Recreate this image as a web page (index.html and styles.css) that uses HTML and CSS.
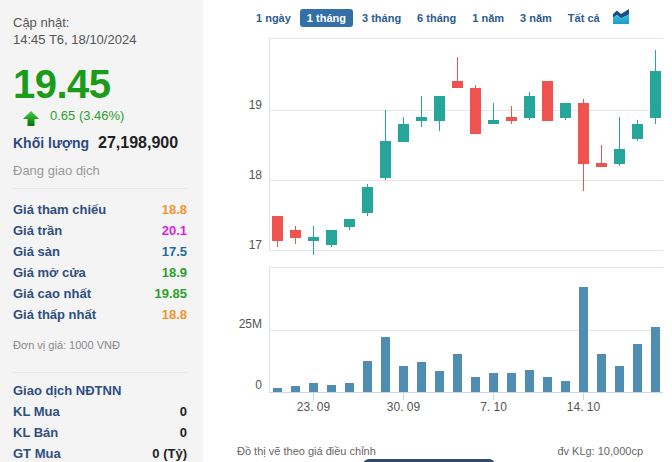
FILE: index.html
```html
<!DOCTYPE html>
<html lang="vi">
<head>
<meta charset="utf-8">
<title>Stock</title>
<link rel="stylesheet" href="styles.css">
</head>
<body>
<div class="page">
  <aside class="info">
    <div class="updated">Cập nhật:<br>14:45 T6, 18/10/2024</div>
    <div class="price">19.45</div>
    <div class="change">
      <svg class="arrow" width="16" height="15" viewBox="0 0 16 15">
        <defs>
          <linearGradient id="ag" x1="0" y1="0" x2="0" y2="1">
            <stop offset="0" stop-color="#3fd23f"/>
            <stop offset="1" stop-color="#067006"/>
          </linearGradient>
        </defs>
        <polygon points="8,0 16,8 11.5,8 11.5,15 4.5,15 4.5,8 0,8" fill="url(#ag)"/>
      </svg>
      <span>0.65 (3.46%)</span>
    </div>
    <div class="volume"><span class="vol-label">Khối lượng</span><span class="vol-value">27,198,900</span></div>
    <div class="status">Đang giao dịch</div>
    <div class="prices">
      <div class="row"><span class="lbl">Giá tham chiếu</span><span class="val ref">18.8</span></div>
      <div class="row"><span class="lbl">Giá trần</span><span class="val ceil">20.1</span></div>
      <div class="row"><span class="lbl">Giá sàn</span><span class="val floor">17.5</span></div>
      <div class="row"><span class="lbl">Giá mở cửa</span><span class="val up">18.9</span></div>
      <div class="row"><span class="lbl">Giá cao nhất</span><span class="val up">19.85</span></div>
      <div class="row"><span class="lbl">Giá thấp nhất</span><span class="val ref">18.8</span></div>
    </div>
    <div class="unit">Đơn vị giá: 1000 VNĐ</div>
    <div class="foreign">
      <div class="row"><span class="lbl">Giao dịch NĐTNN</span></div>
      <div class="row"><span class="lbl">KL Mua</span><span class="val plain">0</span></div>
      <div class="row"><span class="lbl">KL Bán</span><span class="val plain">0</span></div>
      <div class="row"><span class="lbl">GT Mua</span><span class="val plain">0 (Tỷ)</span></div>
    </div>
  </aside>
  <main class="chart">
    <div class="toolbar">
      <span class="range">1 ngày</span>
      <span class="range active">1 tháng</span>
      <span class="range">3 tháng</span>
      <span class="range">6 tháng</span>
      <span class="range">1 năm</span>
      <span class="range">3 năm</span>
      <span class="range">Tất cả</span>
      <svg class="type-icon" width="16" height="16" viewBox="0 0 16 16">
        <defs>
          <linearGradient id="cg" x1="0" y1="0" x2="0" y2="1">
            <stop offset="0" stop-color="#2fc0e0"/>
            <stop offset="1" stop-color="#1f9cc6"/>
          </linearGradient>
        </defs>
        <polygon points="0,5 4,1.5 8,5 16,0 16,5.5 8,9.5 4,6 0,9" fill="#1d4f86"/>
        <polygon points="0,9 4,6 8,9.5 16,5.5 16,15 0,15" fill="url(#cg)"/>
      </svg>
    </div>
    <svg class="plot" width="469" height="400" viewBox="0 0 469 400">
      <g transform="translate(-203,-30)" font-family="Liberation Sans, Arial, sans-serif" font-size="12" fill="#555">
        <!-- price pane -->
        <line x1="269" y1="38.5" x2="663" y2="38.5" stroke="#e6e6e6"/>
        <line x1="269" y1="110.5" x2="663" y2="110.5" stroke="#e6e6e6"/>
        <line x1="269" y1="180.5" x2="663" y2="180.5" stroke="#e6e6e6"/>
        <line x1="269" y1="250.5" x2="663" y2="250.5" stroke="#e6e6e6"/>
        <line x1="269.5" y1="38" x2="269.5" y2="251" stroke="#dde2ea"/>
        <text x="262" y="108.5" text-anchor="end">19</text>
        <text x="262" y="178.5" text-anchor="end">18</text>
        <text x="262" y="249" text-anchor="end">17</text>

        <g class="red" fill="#ef5350">
          <rect x="277" y="216" width="1" height="31"/><rect x="272" y="216" width="11" height="25"/>
          <rect x="295" y="226" width="1" height="18"/><rect x="290" y="230" width="11" height="8"/>
          <rect x="457" y="57" width="1" height="31"/><rect x="452" y="81" width="11" height="7"/>
          <rect x="475" y="85" width="1" height="49"/><rect x="470" y="88" width="11" height="46"/>
          <rect x="511" y="106" width="1" height="18"/><rect x="506" y="117" width="11" height="4"/>
          <rect x="542" y="81" width="11" height="40"/>
          <rect x="583" y="99" width="1" height="92"/><rect x="578" y="103" width="11" height="61"/>
          <rect x="601" y="145" width="1" height="22"/><rect x="596" y="163" width="11" height="4"/>
        </g>
        <g class="teal" fill="#26a69a">
          <rect x="313" y="226" width="1" height="29"/><rect x="308" y="237" width="11" height="4"/>
          <rect x="331" y="230" width="1" height="17"/><rect x="326" y="230" width="11" height="15"/>
          <rect x="349" y="219" width="1" height="11"/><rect x="344" y="219" width="11" height="8"/>
          <rect x="367" y="184" width="1" height="32"/><rect x="362" y="187" width="11" height="26"/>
          <rect x="385" y="110" width="1" height="70"/><rect x="380" y="141" width="11" height="37"/>
          <rect x="403" y="117" width="1" height="25"/><rect x="398" y="124" width="11" height="18"/>
          <rect x="421" y="96" width="1" height="31"/><rect x="416" y="117" width="11" height="4"/>
          <rect x="439" y="96" width="1" height="35"/><rect x="434" y="96" width="11" height="25"/>
          <rect x="493" y="103" width="1" height="21"/><rect x="488" y="120" width="11" height="4"/>
          <rect x="529" y="92" width="1" height="28"/><rect x="524" y="96" width="11" height="22"/>
          <rect x="565" y="103" width="1" height="17"/><rect x="560" y="103" width="11" height="15"/>
          <rect x="619" y="117" width="1" height="49"/><rect x="614" y="149" width="11" height="15"/>
          <rect x="637" y="120" width="1" height="21"/><rect x="632" y="124" width="11" height="15"/>
          <rect x="655" y="50" width="1" height="74"/><rect x="650" y="71" width="11" height="47"/>
        </g>

        <!-- volume pane -->
        <line x1="269" y1="267.5" x2="663" y2="267.5" stroke="#e6e6e6"/>
        <line x1="269" y1="330.5" x2="663" y2="330.5" stroke="#e6e6e6"/>
        <line x1="269.5" y1="267" x2="269.5" y2="392" stroke="#dde2ea"/>
        <text x="262" y="327.5" text-anchor="end">25M</text>
        <text x="262" y="389" text-anchor="end">0</text>
        <g fill="#4f8db2">
          <rect x="273" y="388" width="9" height="4"/>
          <rect x="291" y="386" width="9" height="6"/>
          <rect x="309" y="383" width="9" height="9"/>
          <rect x="327" y="385" width="9" height="7"/>
          <rect x="345" y="383" width="9" height="9"/>
          <rect x="363" y="361" width="9" height="31"/>
          <rect x="381" y="337" width="9" height="55"/>
          <rect x="399" y="366" width="9" height="26"/>
          <rect x="417" y="362" width="9" height="30"/>
          <rect x="435" y="371" width="9" height="21"/>
          <rect x="453" y="354" width="9" height="38"/>
          <rect x="471" y="377" width="9" height="15"/>
          <rect x="489" y="373" width="9" height="19"/>
          <rect x="507" y="373" width="9" height="19"/>
          <rect x="525" y="370" width="9" height="22"/>
          <rect x="543" y="377" width="9" height="15"/>
          <rect x="561" y="381" width="9" height="11"/>
          <rect x="579" y="287" width="9" height="105"/>
          <rect x="597" y="354" width="9" height="38"/>
          <rect x="615" y="366" width="9" height="26"/>
          <rect x="633" y="344" width="9" height="48"/>
          <rect x="651" y="327" width="9" height="65"/>
        </g>
        <line x1="269" y1="392.5" x2="663" y2="392.5" stroke="#ccd6eb"/>
        <g stroke="#ccd6eb">
          <line x1="313.5" y1="392" x2="313.5" y2="400"/>
          <line x1="403.5" y1="392" x2="403.5" y2="400"/>
          <line x1="493.5" y1="392" x2="493.5" y2="400"/>
          <line x1="583.5" y1="392" x2="583.5" y2="400"/>
        </g>
        <text x="313.5" y="411" text-anchor="middle">23. 09</text>
        <text x="403.5" y="411" text-anchor="middle">30. 09</text>
        <text x="493.5" y="411" text-anchor="middle">7. 10</text>
        <text x="583.5" y="411" text-anchor="middle">14. 10</text>
      </g>
    </svg>
    <div class="foot">
      <span>Đồ thị vẽ theo giá điều chỉnh</span>
      <span>đv KLg: 10,000cp</span>
    </div>
    <div class="dark-btn"></div>
  </main>
</div>
</body>
</html>
```

FILE: styles.css
```css
html, body {
  margin: 0;
  padding: 0;
  background: #fff;
  overflow: hidden;
}
body {
  font-family: "Liberation Sans", Arial, sans-serif;
  color: #333;
}
.page {
  display: flex;
  height: 462px;
  overflow: hidden;
}
.info {
  width: 203px;
  box-sizing: border-box;
  flex: none;
  background: #f4f4f4;
  padding: 14px 16px 0 13px;
}
.updated {
  font-size: 13px;
  line-height: 17px;
  color: #555;
}
.price {
  margin-top: 14px;
  font-size: 40px;
  line-height: 44px;
  font-weight: bold;
  color: #1a9c1a;
  letter-spacing: -0.5px;
}
.change {
  margin-top: 1px;
  height: 18px;
  display: flex;
  align-items: flex-start;
  padding-left: 10px;
  font-size: 13px;
  line-height: 18px;
  color: #2f9f2f;
}
.arrow {
  margin-top: 4px;
  margin-right: 11px;
  flex: none;
}
.volume {
  margin-top: 8px;
  display: flex;
  align-items: baseline;
  line-height: 20px;
}
.vol-label {
  width: 85px;
  flex: none;
  font-size: 14px;
  font-weight: bold;
  color: #2b4c7e;
}
.vol-value {
  font-size: 16px;
  font-weight: bold;
  color: #222;
}
.status {
  margin-top: 9px;
  font-size: 13px;
  line-height: 17px;
  color: #999;
}
.prices {
  margin-top: 9px;
  border-top: 1px solid #e9e9e9;
  padding-top: 10px;
}
.row {
  display: flex;
  justify-content: space-between;
  height: 21px;
  line-height: 21px;
  font-size: 13px;
  font-weight: bold;
}
.lbl {
  color: #2e4f80;
}
.val.ref { color: #f0952f; }
.val.ceil { color: #dc1edc; }
.val.floor { color: #1f6e9c; }
.val.up { color: #2c9e2c; }
.val.plain { color: #222; }
.unit {
  margin-top: 13px;
  font-size: 11px;
  line-height: 14px;
  color: #888;
}
.foreign {
  margin-top: 20px;
  border-top: 1px solid #e9e9e9;
  padding-top: 7px;
}
.chart {
  flex: 1;
  display: flex;
  flex-direction: column;
  min-height: 0;
}
.chart > * {
  flex: none;
}
.toolbar {
  height: 30px;
  box-sizing: border-box;
  padding: 9px 0 0 46px;
  display: flex;
  align-items: flex-start;
  gap: 2px;
}
.range {
  font-size: 11px;
  font-weight: bold;
  line-height: 18px;
  padding: 0 7px;
  color: #2b5b8d;
  border-radius: 3px;
  white-space: nowrap;
}
.range.active {
  background: #3470a8;
  color: #fff;
}
.type-icon {
  margin-left: 4px;
  flex: none;
}
.plot {
  display: block;
}
.foot {
  display: flex;
  justify-content: space-between;
  padding: 14px 29px 0 34px;
  font-size: 11px;
  line-height: 14px;
  color: #666;
}
.dark-btn {
  margin: 1px 0 0 160px;
  width: 132px;
  height: 10px;
  background: #2c4a6a;
  border-radius: 6px 6px 0 0;
}
```
